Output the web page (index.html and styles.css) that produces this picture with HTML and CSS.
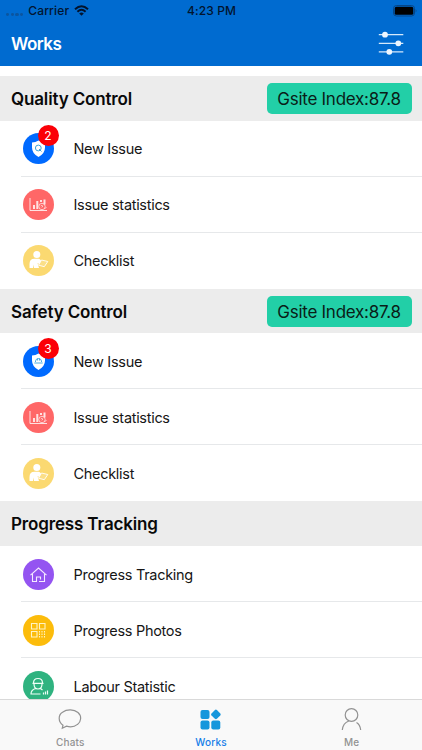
FILE: index.html
```html
<!DOCTYPE html>
<html lang="en">
<head>
<meta charset="utf-8">
<title>Works</title>
<link rel="stylesheet" href="styles.css">
</head>
<body>
<div class="app">
  <header class="top">
    <div class="status">
      <div class="carrier"><span class="dots"><i></i><i></i><i></i><i></i></span><span>Carrier</span>
        <svg width="15" height="11" viewBox="0 0 15 11" fill="none" stroke="#02142e" stroke-width="2"><path d="M1 4.2Q7.5-1.8 14 4.2M3.4 6.7Q7.5 2.9 11.6 6.7"/><path d="M5.2 8.4Q7.500 6.500 9.800 8.400L7.500 10.700Z" fill="#02142e" stroke="none"/></svg>
      </div>
      <span class="time">4:23 PM</span>
      <svg class="battery" width="24" height="12" viewBox="0 0 24 12"><rect x=".5" y=".5" width="21" height="10.500" rx="3" fill="none" stroke="#064687"/><rect x="1.700" y="1.800" width="18.600" height="8" rx="1.600" fill="#000"/><path d="M22.700 4q1.500 1.800 0 3.600z" fill="#064687"/></svg>
    </div>
    <div class="nav">
      <h1>Works</h1>
      <svg width="26" height="26" viewBox="0 0 26 26" stroke="#d5e9fb" stroke-width="1.300" fill="#edf6ff"><path d="M.8 4.700h24.500M.8 13.300h24.500M.8 21.800h24.500"/><g stroke="none"><circle cx="7" cy="4.700" r="2.900"/><circle cx="20.300" cy="13.300" r="2.900"/><circle cx="11.300" cy="21.800" r="2.900"/></g></svg>
    </div>
  </header>

  <main class="content">
    <section>
      <div class="section-head"><h2>Quality Control</h2><span class="index">Gsite Index:87.8</span></div>
      <div class="row"><span class="icon blue"><svg viewBox="0 0 31 31"><path d="M15.500 7.500Q18.500 9.500 22 9.500v5q0 6-6.500 9.500Q9 20.500 9 14.500v-5q3.500 0 6.500-2z" fill="#fff"/><circle cx="15.300" cy="15" r="2.900" fill="none" stroke="#3ba4dc"/><path d="M16 16l2.500 2.500" stroke="#3ba4dc"/></svg><b class="badge">2</b></span><span class="label">New Issue</span></div>
      <div class="row"><span class="icon red"><svg viewBox="0 0 31 31" fill="none" stroke="#ffe2e1"><path d="M7 9v12.500h17"/><path d="M11 16v4M14.300 12v8M21.500 10.500v5" stroke-width="2"/><path d="M18 13v-2" stroke-width="2"/><circle cx="19" cy="17.500" r="3.200" stroke-width=".8"/><path d="M17.800 17q1.200-1.500 2 0l-1 1.500M21.500 20l2-2" stroke-width=".8"/></svg></span><span class="label">Issue statistics</span></div>
      <div class="row"><span class="icon yellow"><svg viewBox="0 0 31 31" fill="#fff"><circle cx="13.800" cy="9.500" r="3.500"/><path d="M6.500 23v-4q0-5.200 5-5.200h4q2 0 3.500 4l-2 1.700-2.500-1.500 1.500 5H11v-3.500L10 23z"/><path d="M18.500 15l6.300 1.500-3.500 5.200-5.800-1.500z" fill="#fbdf88" stroke="#fff" stroke-width=".9"/></svg></span><span class="label">Checklist</span></div>
    </section>
    <section>
      <div class="section-head"><h2>Safety Control</h2><span class="index">Gsite Index:87.8</span></div>
      <div class="row"><span class="icon blue"><svg viewBox="0 0 31 31"><path d="M15.500 7.500Q18.500 9.500 22 9.500v5q0 6-6.500 9.500Q9 20.500 9 14.500v-5q3.500 0 6.500-2z" fill="#fff"/><path d="M12.500 16v-1q.5-2.500 3-2.500t3 2.500v1M11.300 17h8.400M14.600 12.500v2M16.500 12.500v2" fill="none" stroke="#3ba4dc" stroke-width=".9"/></svg><b class="badge">3</b></span><span class="label">New Issue</span></div>
      <div class="row"><span class="icon red"><svg viewBox="0 0 31 31" fill="none" stroke="#ffe2e1"><path d="M7 9v12.500h17"/><path d="M11 16v4M14.300 12v8M21.500 10.500v5" stroke-width="2"/><path d="M18 13v-2" stroke-width="2"/><circle cx="19" cy="17.500" r="3.200" stroke-width=".8"/><path d="M17.800 17q1.200-1.500 2 0l-1 1.500M21.500 20l2-2" stroke-width=".8"/></svg></span><span class="label">Issue statistics</span></div>
      <div class="row"><span class="icon yellow"><svg viewBox="0 0 31 31" fill="#fff"><circle cx="13.800" cy="9.500" r="3.500"/><path d="M6.500 23v-4q0-5.200 5-5.200h4q2 0 3.500 4l-2 1.700-2.500-1.500 1.500 5H11v-3.500L10 23z"/><path d="M18.500 15l6.300 1.500-3.500 5.200-5.800-1.500z" fill="#fbdf88" stroke="#fff" stroke-width=".9"/></svg></span><span class="label">Checklist</span></div>
    </section>
    <section>
      <div class="section-head"><h2>Progress Tracking</h2></div>
      <div class="row"><span class="icon purple"><svg viewBox="0 0 31 31" fill="none" stroke="#f5eaff" stroke-width="1.100"><path d="M7.500 16.200L15.500 9l8 7.200M9.500 15v7.500h4V18h4v2.500M16 22.500h5.500V15"/></svg></span><span class="label">Progress Tracking</span></div>
      <div class="row"><span class="icon amber"><svg viewBox="0 0 31 31" fill="none" stroke="#fff3c4" stroke-width="1.100"><path d="M8.500 8.500h5.500V14H8.500zM16.500 8.500H22V14h-5.500zM8.500 16.500h5.500V22H8.500z"/><path d="M16.500 16v6.500M19 16v6.500M21.500 16v6.500" stroke-dasharray="1.500 1"/></svg></span><span class="label">Progress Photos</span></div>
      <div class="row"><span class="icon green"><svg viewBox="0 0 31 31" fill="none" stroke="#effff7" stroke-width="1.200"><path d="M10.500 12q0-4.500 4.500-4.500t4.500 4.500M9.500 12.300h11M11 13q0 5 4 5t4-5M12.500 17.500Q8 19 8 23h9.500M17.500 17.500l2 1.500M20.500 23.500v-2M22.500 23.500v-3M24.500 23.500v-4"/></svg></span><span class="label">Labour Statistic</span></div>
    </section>
  </main>

  <nav class="tabs">
    <div class="tab"><svg width="26" height="26" viewBox="0 0 26 26" fill="none" stroke="#929292" stroke-width="1.200"><path d="M6 19.200C1 16 1 9 5.500 6.200C10 3 17 3.200 21 6.500C25 10 24.200 15.800 20.500 18.400C17.500 20.800 13 21.200 9.500 20.200L5.300 22.200Z"/></svg><span>Chats</span></div>
    <div class="tab active"><svg width="26" height="26" viewBox="0 0 26 26" fill="#1697dc"><rect x="2.500" y="4" width="9" height="9" rx="2"/><rect x="2.500" y="14.500" width="9" height="9" rx="2"/><rect x="13.300" y="14.500" width="9" height="9" rx="2"/><rect x="14.100" y="4.600" width="7.600" height="7.600" rx="1.400" transform="rotate(45 17.900 8.400)"/></svg><span>Works</span></div>
    <div class="tab"><svg width="26" height="26" viewBox="0 0 26 26" fill="none" stroke="#929292" stroke-width="1.200"><circle cx="12.500" cy="9" r="6.300"/><path d="M3.300 24q.7-7 6.500-9M21.700 24q-.6-5.500-4.200-7.500"/></svg><span>Me</span></div>
  </nav>
</div>
</body>
</html>
```
FILE: styles.css
```css
* { box-sizing: border-box; }
body { margin: 0; font-family: Inter, "Liberation Sans", sans-serif; color: #161616; background: #fff; }
h1, h2 { margin: 0; }
svg { display: block; }
.app { height: 750px; display: flex; flex-direction: column; overflow: hidden; }
.top { height: 65.500px; flex: none; background: #006bd0; }
.status { height: 21px; display: grid; grid-template-columns: 1fr auto 1fr; align-items: center; padding: 0 5px 0 6px; font-size: 12px; font-weight: 500; color: #02142e; }
.carrier { display: flex; align-items: center; gap: 5px; letter-spacing: .15px; }
.dots { display: flex; gap: 1.500px; padding-top: 7px; }
.dots i { width: 3.200px; height: 3px; border-radius: 50%; background: #0b559f; }
.time { letter-spacing: .1px; }
.battery { justify-self: end; }
.nav { height: 44px; display: flex; justify-content: space-between; align-items: center; padding: 0 18px 0 11px; }
.nav h1 { padding-top: 1px; font-size: 17px; font-weight: 600; letter-spacing: -.5px; color: #fff; }
.content { flex: 1; min-height: 0; overflow: hidden; padding-top: 10.500px; }
.section-head { height: 44.700px; display: flex; justify-content: space-between; align-items: center; padding: 0 10.500px 0 11px; background: #ececec; }
.section-head h2 { padding-top: 1px; font-size: 17px; font-weight: 600; letter-spacing: -.15px; color: #090909; }
.index { width: 145px; height: 31px; border-radius: 5px; background: #22cfa7; font-size: 17px; line-height: 32px; letter-spacing: -.27px; text-align: center; white-space: nowrap; color: #0a1d18; }
.row { height: 56px; display: flex; align-items: center; margin-left: 21px; padding: 1px 0 0 1.500px; border-bottom: 1px solid #e6e8ea; }
.row:last-child { border-bottom-color: transparent; }
.icon { position: relative; width: 31px; height: 31px; border-radius: 50%; margin-right: 20px; }
.blue { background: #006aff; }
.red { background: #ff6767; }
.yellow { background: #fbd971; }
.purple { background: #9454f1; }
.amber { background: #fcbc0b; }
.green { background: #2fb380; }
.badge { position: absolute; left: 15px; top: -8px; width: 21px; height: 21px; border-radius: 50%; background: #fb0007; color: #fff; font-size: 12px; font-weight: 400; line-height: 21px; text-align: center; }
.label { font-size: 14.500px; letter-spacing: -.3px; }
.tabs { height: 51px; flex: none; display: grid; grid-template-columns: repeat(3, 1fr); background: #f9f9f9; border-top: 1px solid #d9d9d9; }
.tab { display: flex; flex-direction: column; align-items: center; padding-top: 6px; font-size: 10px; font-weight: 500; line-height: 12px; color: #929292; letter-spacing: .2px; }
.tab span { margin-top: 4px; }
.active { color: #157ee8; }
```
